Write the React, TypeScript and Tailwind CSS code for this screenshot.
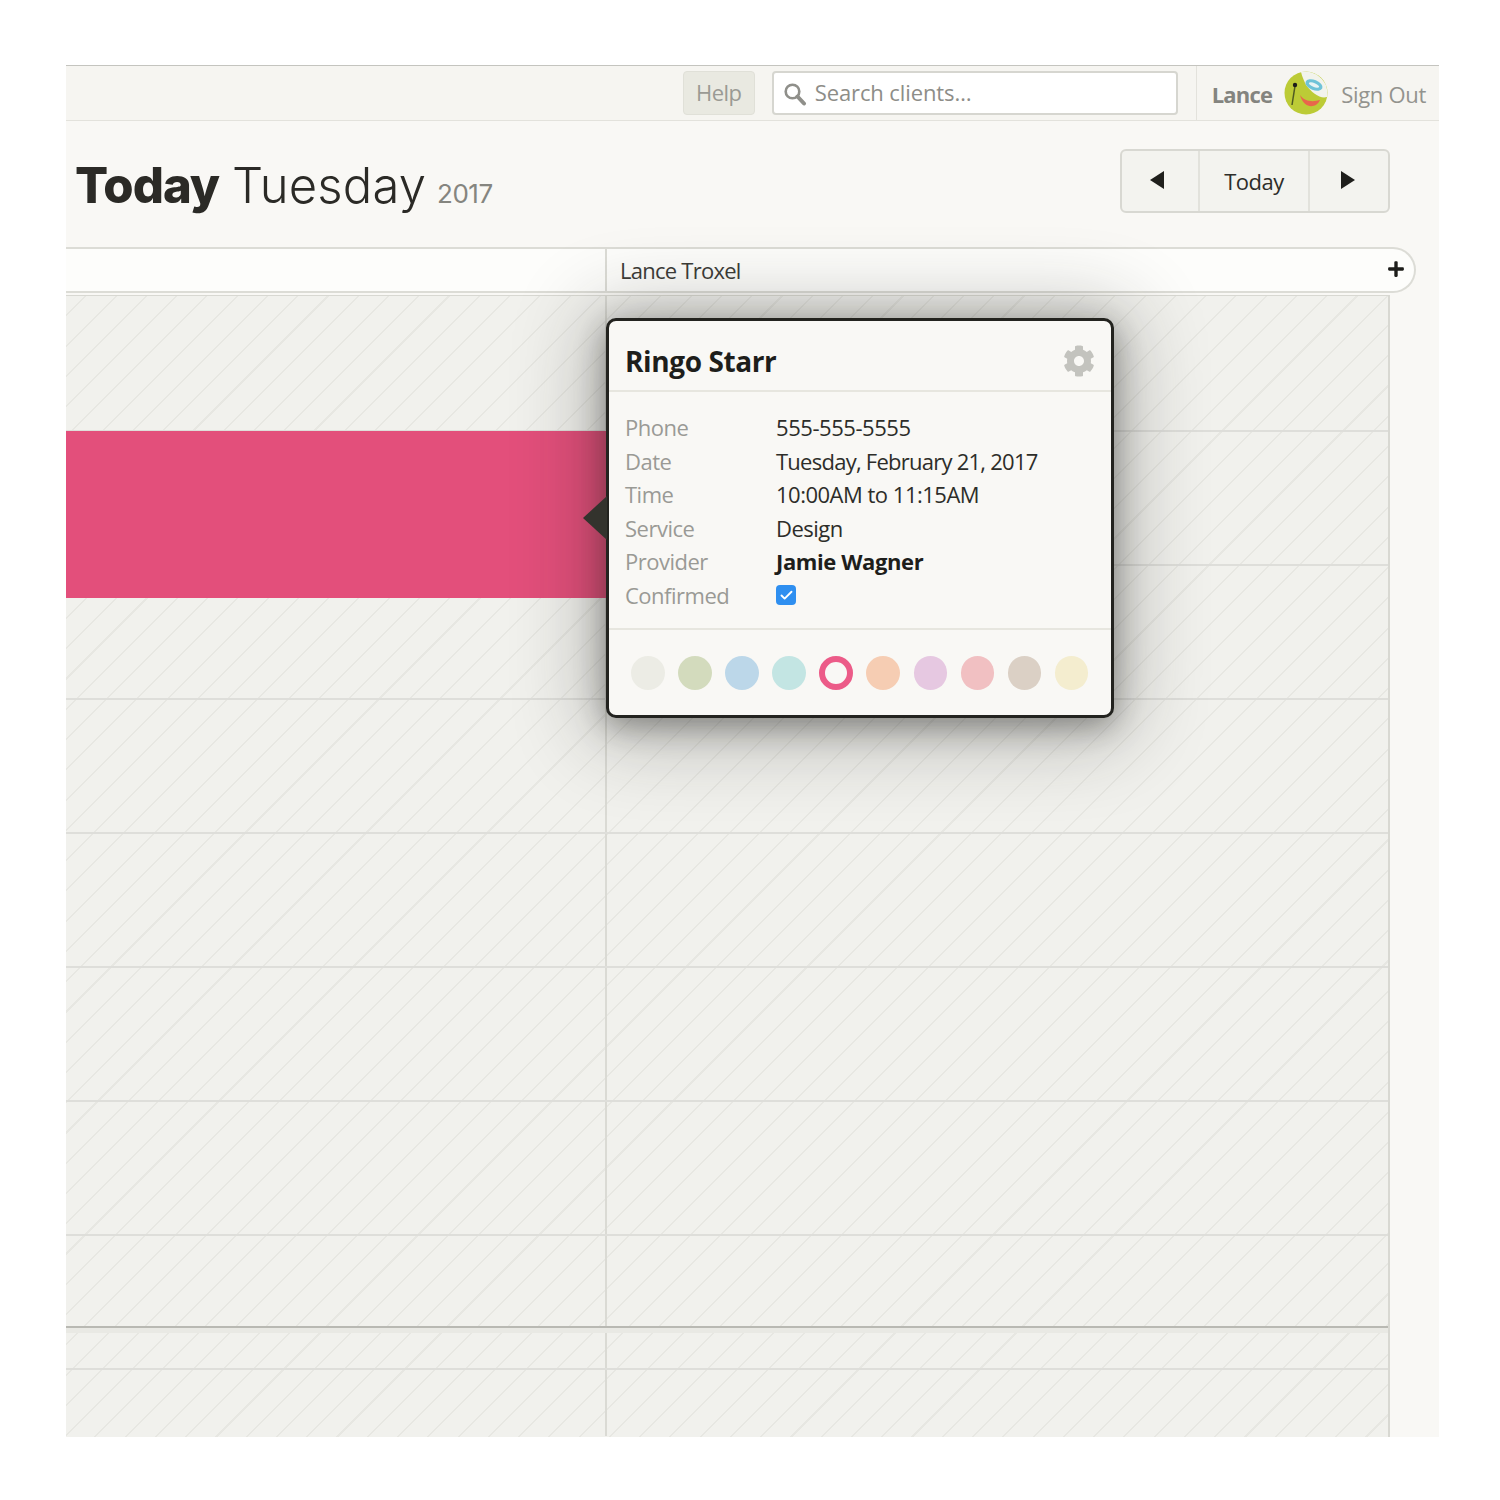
import React from 'react';
import { FaCog, FaPlus } from 'react-icons/fa';
import { Check } from 'lucide-react';

const details = [
  { label: 'Phone', value: '555-555-5555', tone: 'tracking-[-0.45px] text-[#2d2d29]' },
  { label: 'Date', value: 'Tuesday, February 21, 2017', tone: 'tracking-[-0.75px] text-[#2d2d29]' },
  { label: 'Time', value: '10:00AM to 11:15AM', tone: 'tracking-[-0.5px] text-[#2d2d29]' },
  { label: 'Service', value: 'Design', tone: 'tracking-[-0.5px] text-[#2d2d29]' },
  { label: 'Provider', value: 'Jamie Wagner', tone: 'tracking-[-0.4px] font-bold text-[#1e1e1b]' },
];

const swatches = ['bg-[#ecece5]', 'bg-[#d3dbbd]', 'bg-[#bcd7e9]', 'bg-[#c3e5e3]', '', 'bg-[#f6cdb3]', 'bg-[#e6c8e1]', 'bg-[#f1c0c2]', 'bg-[#dbd0c5]', 'bg-[#f4edcf]'];

const Arrow: React.FC<{ right?: boolean }> = ({ right }) => (
  <svg width="14" height="18" viewBox="0 0 14 18" className="text-[#1f1f1c]">
    <path d={right ? 'M0 0 L14 9 L0 18 Z' : 'M14 0 L0 9 L14 18 Z'} fill="currentColor" />
  </svg>
);

const SearchIcon: React.FC = () => (
  <svg width="24" height="24" viewBox="0 0 24 24" className="text-[#8f8f8a] mr-[8px] mt-[3px] shrink-0">
    <circle cx="9.5" cy="9.5" r="6.8" stroke="currentColor" strokeWidth="2.6" fill="none" />
    <path d="M14.5 14.5 L21 21.5" stroke="currentColor" strokeWidth="4" strokeLinecap="round" />
  </svg>
);

const Avatar: React.FC = () => (
  <svg width="44" height="44" viewBox="0 0 44 44" className="ml-[12px] mr-[13px] -mt-[3px]">
    <circle cx="22" cy="22" r="21.5" fill="#bccb36" />
    <path d="M17 1 C24 -1 36 2 42 14 C43 18 44 22 43 26 C36 28 28 22 22 14 C20 10 18 5 17 1 Z" fill="#f2f3ec" />
    <ellipse cx="30" cy="14" rx="9" ry="5" transform="rotate(22 30 14)" fill="#6fc3d8" />
    <ellipse cx="30" cy="14" rx="5.5" ry="2" transform="rotate(22 30 14)" fill="#e8f4f4" />
    <path d="M16 24 C21 31 29 31 36 29 C33 37 20 39 16 24 Z" fill="#e8664b" />
    <path d="M11 15 L8 34" stroke="#4f5a22" strokeWidth="1.5" fill="none" />
    <circle cx="11" cy="14" r="2.2" fill="#1c1c1a" />
  </svg>
);

const GridRow: React.FC<{ height: string; border: string }> = ({ height, border }) => (
  <div className={`grid grid-cols-[541px_1fr] ${height} ${border}`}>
    <div className="border-r-2 border-[#dadad4]" />
    <div />
  </div>
);

const App: React.FC = () => {
  return (
    <div className="w-[1500px] h-[1500px] bg-white pt-[65px] pl-[66px] font-['Open_Sans',sans-serif]">
      <div className="w-[1373px] h-[1372px] bg-[#f9f8f5] overflow-hidden flex flex-col">
        {/* top bar */}
        <div className="h-[56px] shrink-0 bg-[#f6f5f1] border-t border-b border-t-[#c4c4bf] border-b-[#e3e2dc] flex items-center justify-end">
          <div className="w-[72px] h-[44px] rounded-[4px] bg-[#e9e9e1] border border-[#e0e0d8] flex items-center justify-center text-[22px] text-[#9a9a94] tracking-[-0.6px] mr-[17px] -mt-[1px]">
            Help
          </div>
          <div className="w-[406px] h-[44px] rounded-[4px] bg-white border-2 border-[#d6d6d0] flex items-center pl-[9px] text-[22px] text-[#8d8d88] tracking-[-0.1px] -mt-[1px]">
            <SearchIcon />
            Search clients…
          </div>
          <div className="h-full ml-[18px] pl-[15px] border-l border-[#e3e2dc] flex items-center pr-[13px] pt-[2px]">
            <span className="text-[22px] font-bold text-[#84847f] tracking-[-0.8px]">Lance</span>
            <Avatar />
            <span className="text-[22px] text-[#93938e] tracking-[-0.3px]">Sign Out</span>
          </div>
        </div>

        {/* title row */}
        <div className="h-[126px] shrink-0 flex items-start justify-between pr-[49px]">
          <h1 className="pl-[9px] pt-[30px] text-[#2b2a26] text-[49px] leading-[70px] font-['Inter',sans-serif] font-light whitespace-nowrap tracking-[-1px]">
            <span className="font-extrabold">Today</span> <span className="tracking-[0.2px]">Tuesday</span>{' '}
            <span className="text-[26px] font-normal text-[#85857f] tracking-[-0.5px] -ml-[2px]">2017</span>
          </h1>
          <div className="mt-[28px] h-[64px] w-[270px] rounded-[6px] border-2 border-[#d8d8d2] bg-[#f3f3ef] grid grid-cols-[76px_1fr_78px]">
            <div className="flex items-center justify-center pb-[2px] pr-[6px]"><Arrow /></div>
            <div className="flex items-center justify-center border-x-2 border-[#e2e2dc] text-[22px] tracking-[-0.5px] text-[#2d2d29]">Today</div>
            <div className="flex items-center justify-center pb-[2px] pr-[2px]"><Arrow right /></div>
          </div>
        </div>

        {/* provider header */}
        <div className="h-[46px] shrink-0 w-[1350px] bg-[#fdfdfb] border-y-2 border-r-2 border-[#dcdcd6] rounded-r-[23px] grid grid-cols-[541px_1fr]">
          <div className="border-r-2 border-[#dcdcd6]" />
          <div className="flex items-center justify-between pl-[13px] pr-[9px] text-[22px] tracking-[-0.75px] text-[#3c3c38]">
            Lance Troxel
            <FaPlus size={18} className="text-[#1d1d1a] -mt-[2px]" />
          </div>
        </div>

        {/* calendar */}
        <div className="relative mt-[2px] w-[1324px] flex-1 border-t border-r-2 border-[#d8d8d2] bg-[#f1f1ed] bg-[repeating-linear-gradient(135deg,transparent_0,transparent_13.3px,#e7e7e2_13.3px,#e7e7e2_14.8px,transparent_14.8px,transparent_21.4px)]">
          <GridRow height="h-[136px]" border="border-b-2 border-[#dededa]" />
          <GridRow height="h-[134px]" border="border-b-2 border-[#dededa]" />
          <GridRow height="h-[134px]" border="border-b-2 border-[#dededa]" />
          <GridRow height="h-[134px]" border="border-b-2 border-[#dededa]" />
          <GridRow height="h-[134px]" border="border-b-2 border-[#dededa]" />
          <GridRow height="h-[134px]" border="border-b-2 border-[#dededa]" />
          <GridRow height="h-[134px]" border="border-b-2 border-[#dededa]" />
          <GridRow height="h-[92px]" border="border-b-2 border-[#b9b9b3]" />
          <GridRow height="h-[42px]" border="border-b-2 border-[#dededa] border-t-[5px] border-t-[#e9e9e4]" />
          <GridRow height="h-[66px]" border="" />

          {/* appointment */}
          <div className="absolute left-0 top-[135px] w-[541px] h-[167px] bg-[#e34f7b]" />

          {/* popover */}
          <div className="absolute left-[540px] top-[22px] w-[508px] h-[400px] rounded-[10px] border-[3px] border-[#23231f] bg-[#f9f8f5] shadow-[0_8px_30px_rgba(30,30,25,0.38),0_6px_80px_14px_rgba(30,30,25,0.3)]">
            <svg width="24" height="44" viewBox="0 0 24 44" className="absolute -left-[26px] top-[175px] text-[#33332d]">
              <path d="M24 0 L0 22 L24 44 Z" fill="currentColor" />
            </svg>
            <div className="h-[71px] flex items-center justify-between pl-[16px] pr-[16px] pt-[10px] border-b-2 border-[#e7e6df]">
              <h2 className="text-[28px] font-bold text-[#1e1e1b] tracking-[-0.4px]">Ringo Starr</h2>
              <FaCog size={32} className="text-[#c3c3be] mt-[1px]" />
            </div>
            <div className="h-[238px] pt-[19px] pl-[16px] border-b-2 border-[#e7e6df] text-[22px] leading-[33.5px] tracking-[-0.5px]">
              {details.map((row) => (
                <div key={row.label} className="flex">
                  <span className="w-[151px] text-[#9a9a95]">{row.label}</span>
                  <span className={row.tone}>{row.value}</span>
                </div>
              ))}
              <div className="flex items-center">
                <span className="w-[151px] text-[#9a9a95]">Confirmed</span>
                <span className="w-[20px] h-[20px] rounded-[4px] bg-[#2f8ff0] flex items-center justify-center">
                  <Check size={15} strokeWidth={3} className="text-white" />
                </span>
              </div>
            </div>
            <div className="flex items-center gap-[13.6px] pl-[22px] pt-[26px]">
              {swatches.map((color, i) =>
                color ? (
                  <div key={i} className={`w-[33.5px] h-[33.5px] rounded-full ${color}`} />
                ) : (
                  <div key={i} className="w-[33.5px] h-[33.5px] rounded-full border-[6px] border-[#ec5b88] bg-[#f9f8f5]" />
                ),
              )}
            </div>
          </div>
        </div>
      </div>
    </div>
  );
};

export default App;
